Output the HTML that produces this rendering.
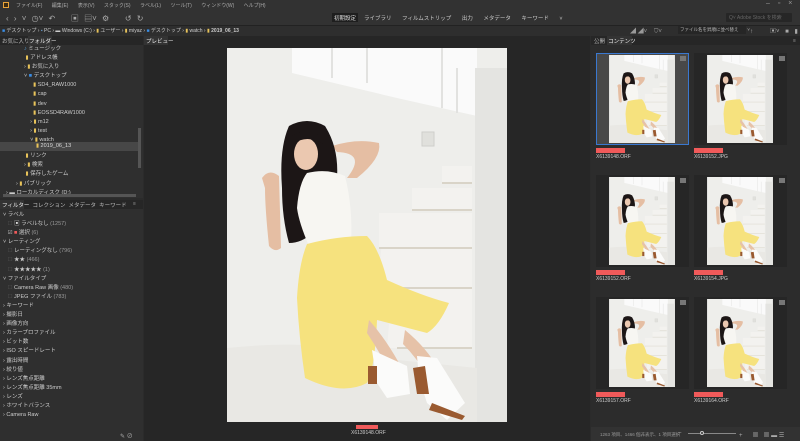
<!DOCTYPE html>
<html><head><meta charset="utf-8"><style>
*{margin:0;padding:0;box-sizing:border-box}
body{width:800px;height:441px;overflow:hidden;background:#2b2b2b;font-family:"Liberation Sans","Noto Sans CJK JP",sans-serif;font-size:6px;color:#bdbdbd;position:relative}
.abs{position:absolute}
.t{position:absolute;white-space:nowrap}
svg{display:block}
</style></head><body>
<svg width="0" height="0" style="position:absolute"><defs>
<g id="ph">
<rect width="280" height="374" fill="#eeeeeb"/>
<path d="M65 0 L250 0 L250 68 L170 50 L65 25Z" fill="#fafafa"/>
<path d="M105 0 V30 M140 0 V35 M215 0 V60 M230 20 V65" stroke="#e2e2e0" stroke-width="2"/>
<rect x="248" y="20" width="32" height="354" fill="#e4e4e1"/>
<path d="M215 118 H245 V135 H215Z M185 140 H245 V162 H185Z M152 165 H245 V200 H152Z M155 195 H245 V240 H150Z M165 240 H245 V300 H160Z" fill="#f3f2ef"/>
<path d="M215 135 H245 M185 162 H245 M152 200 H245 M155 240 H245 M170 300 H245" stroke="#d9d4c8" stroke-width="2"/>
<path d="M0 300 Q100 290 150 310 L250 320 L250 374 L0 374Z" fill="#e9e8e4"/>
<rect x="195" y="84" width="12" height="14" fill="#e0e0dc" stroke="#cfcfcb"/>
<path d="M35 130 Q42 120 52 128 L54 200 Q48 205 42 198 Q38 160 38 140Z" fill="#e5bea3"/>
<path d="M105 98 Q130 90 152 95 Q155 110 130 130 L120 130 Q140 105 110 104Z" fill="#e5bea3"/>
<path d="M62 78 Q80 68 98 78 Q112 100 110 130 Q100 150 85 185 Q75 195 62 195 Q55 170 55 140 Q52 100 62 78Z" fill="#1c1616"/>
<ellipse cx="79" cy="106" rx="12" ry="16" fill="#ebc8b0"/>
<path d="M65 88 Q80 78 96 90 L96 96 Q80 86 66 96Z" fill="#1c1616"/>
<path d="M80 125 Q100 120 118 128 Q126 160 124 195 L82 198 Q72 175 70 160 Q72 135 80 125Z" fill="#f7f6f2"/>
<path d="M80 196 Q110 188 140 188 Q152 200 160 232 Q195 248 222 255 Q212 278 200 285 L150 272 Q148 320 140 335 Q115 348 78 330 Q72 290 70 250 Q72 215 80 196Z" fill="#f6e27e"/>
<path d="M142 272 Q158 290 172 315 L160 318 Q150 300 140 285Z" fill="#e6c2a8"/>
<path d="M178 282 Q200 300 212 322 L200 328 Q190 310 176 296Z" fill="#e6c2a8"/>
<path d="M145 302 L180 318 L183 346 L160 350 L150 335Z" fill="#fbfbfa"/>
<rect x="141" y="318" width="9" height="18" fill="#9a5a30"/>
<path d="M190 308 L210 310 L238 355 L220 372 L200 355 L192 330Z" fill="#fbfbfa"/>
<path d="M186 320 L198 318 L202 346 L190 346Z" fill="#9a5a30"/>
<path d="M205 355 L238 368 L235 372 L202 362Z" fill="#9a5a30"/>
</g></defs></svg>
<!-- menu bar -->
<div class="abs" style="left:0;top:0;width:800px;height:11px;background:#323232"></div>
<div class="abs" style="left:3px;top:2px;width:6px;height:6px;background:#3b2a10;border:1px solid #e8a33a"></div>
<div class="t" style="left:16px;top:2px;font-size:5px;color:#aaa;word-spacing:8px">ファイル(F) 編集(E) 表示(V) スタック(S) ラベル(L) ツール(T) ウィンドウ(W) ヘルプ(H)</div>
<div class="t" style="left:766px;top:0;font-size:7px;color:#999;word-spacing:6px">– ▫ ×</div>
<!-- toolbar -->
<div class="abs" style="left:0;top:11px;width:800px;height:14px;background:#323232"></div>
<div class="t" style="left:6px;top:13px;font-size:8px;color:#aaa;word-spacing:3px">‹ › ˅ ◷˅ ↶ &nbsp; ▣ ▤˅ ⚙ &nbsp; ↺ ↻</div>
<div class="abs" style="left:332px;top:13px;width:26px;height:9px;background:#1e1e1e"></div>
<div class="t" style="left:334px;top:14px;font-size:5.5px;color:#ddd">初期設定</div>
<div class="t" style="left:364px;top:14px;font-size:5.5px;color:#ccc;word-spacing:9px">ライブラリ フィルムストリップ 出力 メタデータ キーワード ˅</div>
<div class="abs" style="left:726px;top:13px;width:66px;height:9px;background:#262626;border-radius:1px"></div>
<div class="t" style="left:729px;top:14px;font-size:5px;color:#666">Q˅ Adobe Stock を検索</div>
<!-- path bar -->
<div class="abs" style="left:0;top:25px;width:800px;height:11px;background:#2e2e2e;border-top:1px solid #222"></div>
<div class="t" style="left:2px;top:27px;font-size:5px;color:#ccc"><span style="color:#3a8ee6">■</span> デスクトップ › <span style="color:#69c">▪</span> PC › ▬ Windows (C:) › <span style="color:#e8c35a">▮</span> ユーザー › <span style="color:#e8c35a">▮</span> miyaz › <span style="color:#3a8ee6">■</span> デスクトップ › <span style="color:#e8c35a">▮</span> watch › <span style="color:#e8c35a">▮</span> <b>2019_06_13</b></div>
<div class="t" style="left:630px;top:26px;font-size:6px;color:#999">◢ ◢˅ &nbsp;&nbsp; ⛉˅</div>
<div class="abs" style="left:678px;top:26px;width:68px;height:8px;background:#262626"></div>
<div class="t" style="left:680px;top:27px;font-size:4.5px;color:#bbb">ファイル名を昇順に並べ替え &nbsp;&nbsp;&nbsp;&nbsp;&nbsp; ˅</div>
<div class="t" style="left:750px;top:26px;font-size:6px;color:#aaa;word-spacing:4px">↑ &nbsp; ▣˅ ■ ▮</div>
<!-- left panel -->
<div class="abs" style="left:0;top:36px;width:143px;height:9px;background:#262626"></div>
<div class="t" style="left:2px;top:37px;font-size:5.5px;color:#bbb">お気に入り</div>
<div class="abs" style="left:28px;top:36px;width:24px;height:9px;background:#333"></div>
<div class="t" style="left:29px;top:37px;font-size:5.5px;color:#eee">フォルダー</div>
<div class="abs" style="left:0;top:45px;width:143px;height:153px;background:#2f2f2f"></div>
<div class="t" style="left:24px;top:45px;font-size:5.5px;line-height:9.1px;color:#ccc">
<span style="color:#59c">♪</span> ミュージック<br>&nbsp;<span style="color:#e8c35a">▮</span> アドレス帳<br>› <span style="color:#e8c35a">▮</span> お気に入り<br>˅ <span style="color:#3a8ee6">■</span> デスクトップ<br>
&nbsp;&nbsp;&nbsp;&nbsp;&nbsp;&nbsp;<span style="color:#e8c35a">▮</span> SD4_RAW1000<br>&nbsp;&nbsp;&nbsp;&nbsp;&nbsp;&nbsp;<span style="color:#e8c35a">▮</span> cap<br>&nbsp;&nbsp;&nbsp;&nbsp;&nbsp;&nbsp;<span style="color:#e8c35a">▮</span> dev<br>&nbsp;&nbsp;&nbsp;&nbsp;&nbsp;&nbsp;<span style="color:#e8c35a">▮</span> EOSSD4RAW1000<br>&nbsp;&nbsp;&nbsp;&nbsp;› <span style="color:#e8c35a">▮</span> m12<br>&nbsp;&nbsp;&nbsp;&nbsp;› <span style="color:#e8c35a">▮</span> test<br>&nbsp;&nbsp;&nbsp;&nbsp;˅ <span style="color:#e8c35a">▮</span> watch</div>
<div class="abs" style="left:0;top:142px;width:138px;height:9px;background:#474747"></div>
<div class="t" style="left:36px;top:143px;font-size:5.5px;color:#ddd"><span style="color:#e8c35a">▮</span> 2019_06_13</div>
<div class="t" style="left:24px;top:152px;font-size:5.5px;line-height:9.1px;color:#ccc">&nbsp;<span style="color:#e8c35a">▮</span> リンク<br>› <span style="color:#e8c35a">▮</span> 検索<br>&nbsp;<span style="color:#e8c35a">▮</span> 保存したゲーム</div>
<div class="t" style="left:16px;top:179px;font-size:5.5px;color:#ccc">› <span style="color:#e8c35a">▮</span> パブリック</div>
<div class="t" style="left:6px;top:188px;font-size:5.5px;color:#ccc">› ▬ ローカルディスク (D:)</div>
<div class="abs" style="left:138px;top:128px;width:3px;height:40px;background:#555"></div>
<div class="abs" style="left:3px;top:194px;width:133px;height:3px;background:#555"></div>
<!-- filter -->
<div class="abs" style="left:0;top:200px;width:143px;height:9px;background:#262626"></div>
<div class="abs" style="left:0;top:200px;width:24px;height:9px;background:#333"></div>
<div class="t" style="left:2px;top:201px;font-size:5.5px;color:#eee">フィルター &nbsp;<span style="color:#bbb">コレクション &nbsp;メタデータ &nbsp;キーワード</span></div>
<div class="abs" style="left:0;top:209px;width:143px;height:232px;background:#2f2f2f"></div>
<div class="t" style="left:3px;top:211px;font-size:5.5px;line-height:9.1px;color:#ccc">
˅ ラベル<br>&nbsp;&nbsp;&nbsp;<span style="color:#555">☐</span> <span style="color:#ddd">▣</span> ラベルなし <span style="color:#999">(1257)</span><br>&nbsp;&nbsp;&nbsp;☑ <span style="color:#f05a5a">■</span> 選択 <span style="color:#999">(6)</span><br>
˅ レーティング<br>&nbsp;&nbsp;&nbsp;<span style="color:#555">☐</span> レーティングなし <span style="color:#999">(796)</span><br>&nbsp;&nbsp;&nbsp;<span style="color:#555">☐</span> ★★ <span style="color:#999">(466)</span><br>&nbsp;&nbsp;&nbsp;<span style="color:#555">☐</span> ★★★★★ <span style="color:#999">(1)</span><br>
˅ ファイルタイプ<br>&nbsp;&nbsp;&nbsp;<span style="color:#555">☐</span> Camera Raw 画像 <span style="color:#999">(480)</span><br>&nbsp;&nbsp;&nbsp;<span style="color:#555">☐</span> JPEG ファイル <span style="color:#999">(783)</span><br>
› キーワード<br>› 撮影日<br>› 画像方向<br>› カラープロファイル<br>› ビット数<br>› ISO スピードレート<br>› 露出時間<br>› 絞り値<br>› レンズ焦点距離<br>› レンズ焦点距離 35mm<br>› レンズ<br>› ホワイトバランス<br>› Camera Raw</div>
<div class="t" style="left:120px;top:431px;font-size:6px;color:#aaa">✎ ⊘</div>
<!-- preview -->
<div class="abs" style="left:144px;top:36px;width:446px;height:9px;background:#262626"></div>
<div class="abs" style="left:144px;top:36px;width:24px;height:9px;background:#333"></div>
<div class="t" style="left:146px;top:37px;font-size:5.5px;color:#eee">プレビュー</div>
<div class="abs" style="left:144px;top:45px;width:446px;height:396px;background:#262626"></div>
<svg class="abs" style="left:227px;top:48px" width="280" height="374" viewBox="0 0 280 374"><use href="#ph"/></svg>
<div class="abs" style="left:356px;top:425px;width:22px;height:4px;background:#f05a5a"></div>
<div class="t" style="left:351px;top:430px;font-size:5px;color:#ccc">X6139148.ORF</div>
<!-- content -->
<div class="abs" style="left:591px;top:36px;width:209px;height:9px;background:#262626"></div>
<div class="abs" style="left:607px;top:36px;width:25px;height:9px;background:#333"></div>
<div class="t" style="left:594px;top:37px;font-size:5.5px;color:#bbb">公開 &nbsp;<span style="color:#eee">コンテンツ</span></div>
<div class="abs" style="left:591px;top:45px;width:209px;height:382px;background:#2c2c2c"></div>
<div class="abs" style="left:591px;top:427px;width:209px;height:14px;background:#323232"></div>
<div class="t" style="left:600px;top:432px;font-size:4.5px;color:#999">1263 項目、1466 個非表示、1 項目選択</div>
<div class="abs" style="left:688px;top:433px;width:48px;height:1px;background:#888"></div>
<div class="t" style="left:678px;top:430px;font-size:6px;color:#aaa">–</div>
<div class="t" style="left:739px;top:430px;font-size:6px;color:#aaa">+ &nbsp;&nbsp;&nbsp;&nbsp; ▦ &nbsp; ▦ ▬ ☰</div>
<div class="abs" style="left:700px;top:431px;width:4px;height:4px;border-radius:50%;border:1px solid #ccc;background:#333"></div>
<!-- thumbnails -->
<div class="abs" style="left:596px;top:53px;width:93px;height:92px;background:#484848;border:1px solid #3a78d0"></div>
<div class="abs" style="left:694px;top:53px;width:93px;height:92px;background:#262626"></div>
<div class="abs" style="left:596px;top:175px;width:93px;height:92px;background:#262626"></div>
<div class="abs" style="left:694px;top:175px;width:93px;height:92px;background:#262626"></div>
<div class="abs" style="left:596px;top:297px;width:93px;height:92px;background:#262626"></div>
<div class="abs" style="left:694px;top:297px;width:93px;height:92px;background:#262626"></div>
<svg class="abs" style="left:609px;top:55px" width="66" height="88" viewBox="0 0 280 374"><use href="#ph"/></svg>
<svg class="abs" style="left:707px;top:55px" width="66" height="88" viewBox="0 0 280 374"><use href="#ph"/></svg>
<svg class="abs" style="left:609px;top:177px" width="66" height="88" viewBox="0 0 280 374"><use href="#ph"/></svg>
<svg class="abs" style="left:707px;top:177px" width="66" height="88" viewBox="0 0 280 374"><use href="#ph"/></svg>
<svg class="abs" style="left:609px;top:299px" width="66" height="88" viewBox="0 0 280 374"><use href="#ph"/></svg>
<svg class="abs" style="left:707px;top:299px" width="66" height="88" viewBox="0 0 280 374"><use href="#ph"/></svg>
<div class="abs" style="left:680px;top:56px;width:6px;height:5px;background:#777"></div>
<div class="abs" style="left:779px;top:56px;width:6px;height:5px;background:#777"></div>
<div class="abs" style="left:680px;top:178px;width:6px;height:5px;background:#777"></div>
<div class="abs" style="left:779px;top:178px;width:6px;height:5px;background:#777"></div>
<div class="abs" style="left:680px;top:300px;width:6px;height:5px;background:#777"></div>
<div class="abs" style="left:779px;top:300px;width:6px;height:5px;background:#777"></div>
<div class="abs" style="left:596px;top:148px;width:29px;height:5px;background:#f05a5a"></div>
<div class="abs" style="left:694px;top:148px;width:29px;height:5px;background:#f05a5a"></div>
<div class="abs" style="left:596px;top:270px;width:29px;height:5px;background:#f05a5a"></div>
<div class="abs" style="left:694px;top:270px;width:29px;height:5px;background:#f05a5a"></div>
<div class="abs" style="left:596px;top:392px;width:29px;height:5px;background:#f05a5a"></div>
<div class="abs" style="left:694px;top:392px;width:29px;height:5px;background:#f05a5a"></div>
<div class="t" style="left:596px;top:154px;font-size:5px;color:#ccc">X6139148.ORF</div>
<div class="t" style="left:694px;top:154px;font-size:5px;color:#ccc">X6139152.JPG</div>
<div class="t" style="left:596px;top:276px;font-size:5px;color:#ccc">X6139152.ORF</div>
<div class="t" style="left:694px;top:276px;font-size:5px;color:#ccc">X6139154.JPG</div>
<div class="t" style="left:596px;top:398px;font-size:5px;color:#ccc">X6139157.ORF</div>
<div class="t" style="left:694px;top:398px;font-size:5px;color:#ccc">X6139164.ORF</div>
<div class="t" style="left:793px;top:38px;font-size:5px;color:#999">≡</div>
<div class="t" style="left:133px;top:201px;font-size:5px;color:#999">≡</div>
</body></html>
